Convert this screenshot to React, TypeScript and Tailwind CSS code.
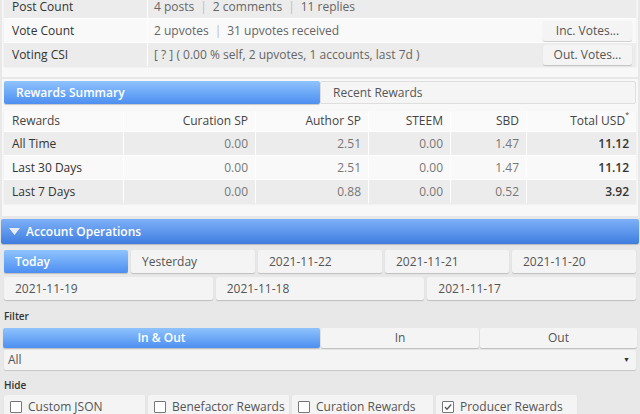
import { useState } from 'react';

const font = { fontFamily: '"Open Sans", "Liberation Sans", sans-serif' };

const rewardRows = [
  { label: 'All Time', curation: '0.00', author: '2.51', steem: '0.00', sbd: '1.47', usd: '11.12' },
  { label: 'Last 30 Days', curation: '0.00', author: '2.51', steem: '0.00', sbd: '1.47', usd: '11.12' },
  { label: 'Last 7 Days', curation: '0.00', author: '0.88', steem: '0.00', sbd: '0.52', usd: '3.92' },
];

const dayTabsTop = ['Today', 'Yesterday', '2021-11-22', '2021-11-21', '2021-11-20'];
const dayTabsBottom = ['2021-11-19', '2021-11-18', '2021-11-17'];

const hideOptions = [
  { label: 'Custom JSON', checked: false },
  { label: 'Benefactor Rewards', checked: false },
  { label: 'Curation Rewards', checked: false },
  { label: 'Producer Rewards', checked: true },
];

const btn = 'h-[23px] rounded-[2px] bg-[#f4f4f4] shadow-[0_1px_1px_rgba(0,0,0,0.18)] text-[12px] text-[#555] flex items-center';
const blue = 'bg-gradient-to-b from-[#8fc3fc] to-[#4d8ff1] text-white font-semibold';

function Sep() {
  return <span className="mx-[6px] text-[#bbb]">|</span>;
}

export default function App() {
  const [day, setDay] = useState('Today');
  const [filter, setFilter] = useState('In & Out');

  return (
    <div className="min-h-screen bg-[#e8e8e8] overflow-hidden" style={font}>
      <div className="-mt-[7px] px-[2px]">
        {/* account stats */}
        <div className="bg-[#f8f8f8] p-[2px] pb-[11px]">
          <div className="flex flex-col gap-[1px] bg-white shadow-[0_1px_2px_rgba(0,0,0,0.08)] text-[12px]">
            <div className="flex h-[23px] bg-[#ececec]">
              <div className="w-[144px] pl-[8px] flex items-center text-[#333] border-r border-white">Post Count</div>
              <div className="flex-1 pl-[6px] flex items-center text-[#666]">4 posts<Sep />2 comments<Sep />11 replies</div>
            </div>
            <div className="flex h-[23px] items-center bg-[#f9f9f9]">
              <div className="w-[144px] h-full pl-[8px] flex items-center text-[#333] border-r border-white">Vote Count</div>
              <div className="flex-1 pl-[6px] flex items-center text-[#666]">2 upvotes<Sep />31 upvotes received</div>
              <button type="button" className={`${btn} !h-[20px] mr-[4px] w-[89px] justify-center`}>Inc. Votes...</button>
            </div>
            <div className="flex h-[23px] items-center bg-[#ececec]">
              <div className="w-[144px] h-full pl-[8px] flex items-center text-[#333] border-r border-white">Voting CSI</div>
              <div className="flex-1 pl-[6px] flex items-center text-[#666]">[ ? ] ( 0.00 % self, 2 upvotes, 1 accounts, last 7d )</div>
              <button type="button" className={`${btn} !h-[20px] mr-[4px] w-[89px] justify-center`}>Out. Votes...</button>
            </div>
          </div>
        </div>

        {/* rewards */}
        <div className="mt-[2px] bg-[#f8f8f8] p-[2px] pb-[13px]">
          <div className="flex h-[23px] text-[12px]">
            <div className={`${blue} w-[316px] rounded-[2px] flex items-center pl-[12px] shadow-[0_1px_1px_rgba(0,0,0,0.2)]`}>Rewards Summary</div>
            <div className="flex-1 rounded-[2px] bg-[#f5f5f5] border border-[#dedede] flex items-center pl-[12px] text-[#555]">Recent Rewards</div>
          </div>
          <div className="mt-[7px] flex flex-col gap-[1px] bg-white shadow-[0_1px_2px_rgba(0,0,0,0.08)] text-[12px]">
            <div className="grid grid-cols-[120px_132px_113px_82px_76px_1fr] h-[20px] bg-[#fafafa] text-[#444]">
              <div className="pl-[8px] flex items-center border-r border-white">Rewards</div>
              <div className="pr-[7px] flex items-center justify-end border-r border-white">Curation SP</div>
              <div className="pr-[7px] flex items-center justify-end border-r border-white">Author SP</div>
              <div className="pr-[7px] flex items-center justify-end border-r border-white">STEEM</div>
              <div className="pr-[7px] flex items-center justify-end border-r border-white">SBD</div>
              <div className="pr-[7px] flex items-center justify-end">Total USD<sup className="text-[7px] -mt-[6px]">*</sup></div>
            </div>
            {rewardRows.map((r, i) => (
              <div key={r.label} className={`grid grid-cols-[120px_132px_113px_82px_76px_1fr] h-[23px] ${i % 2 === 0 ? 'bg-[#ececec]' : 'bg-[#f9f9f9]'}`}>
                <div className="pl-[8px] flex items-center text-[#333] border-r border-white">{r.label}</div>
                <div className="pr-[7px] flex items-center justify-end text-[#777] border-r border-white">{r.curation}</div>
                <div className="pr-[7px] flex items-center justify-end text-[#777] border-r border-white">{r.author}</div>
                <div className="pr-[7px] flex items-center justify-end text-[#777] border-r border-white">{r.steem}</div>
                <div className="pr-[7px] flex items-center justify-end text-[#777] border-r border-white">{r.sbd}</div>
                <div className="pr-[7px] flex items-center justify-end text-[#333] font-semibold">{r.usd}</div>
              </div>
            ))}
          </div>
        </div>
      </div>

      {/* account operations */}
      <div className="mt-[3px] mx-[1px] h-[25px] rounded-[2px] bg-gradient-to-b from-[#7eb0f8] to-[#3e7ddf] flex items-center pl-[8px] text-[12px] font-semibold text-white shadow-[0_1px_1px_rgba(0,0,0,0.2)]">
        <svg width="11" height="7" viewBox="0 0 11 7" className="mr-[6px]"><path d="M0 0h11L5.5 7z" fill="#e8eef8" /></svg>
        Account Operations
      </div>
      <div className="px-[4px] pt-[6px]">
        <div className="grid grid-cols-5 gap-[3px]">
          {dayTabsTop.map((d) => (
            <button key={d} type="button" onClick={() => setDay(d)} className={`${btn} pl-[11px] ${day === d ? blue : ''}`}>{d}</button>
          ))}
        </div>
        <div className="mt-[4px] grid grid-cols-3 gap-[3px]">
          {dayTabsBottom.map((d) => (
            <button key={d} type="button" onClick={() => setDay(d)} className={`${btn} pl-[11px] ${day === d ? blue : ''}`}>{d}</button>
          ))}
        </div>

        <div className="mt-[9px] text-[10px] text-[#333] font-semibold">Filter</div>
        <div className="mt-[4px] -mx-[1px] grid grid-cols-[317px_158px_1fr] gap-[1px] text-[12px]">
          {['In & Out', 'In', 'Out'].map((f) => (
            <button key={f} type="button" onClick={() => setFilter(f)} className={`h-[20px] rounded-[2px] shadow-[0_1px_1px_rgba(0,0,0,0.18)] flex items-center justify-center ${filter === f ? blue : 'bg-[#f4f4f4] text-[#555]'}`}>{f}</button>
          ))}
        </div>
        <div className="mt-[2px] h-[20px] rounded-[2px] bg-[#f4f4f4] shadow-[0_1px_1px_rgba(0,0,0,0.15)] flex items-center justify-between px-[4px] text-[12px] text-[#555]">
          <span>All</span>
          <span className="text-[7px] text-[#333] mr-[2px]">▼</span>
        </div>

        <div className="mt-[8px] text-[10px] text-[#333] font-semibold">Hide</div>
        <div className="mt-[2px] flex gap-[3px]">
          {hideOptions.map((o) => (
            <label key={o.label} className="w-[141px] h-[23px] rounded-[2px] bg-[#f4f4f4] shadow-[0_1px_1px_rgba(0,0,0,0.15)] flex items-center pl-[6px] text-[12px] text-[#555]">
              <span className="w-[12px] h-[12px] border border-[#777] rounded-[1px] bg-white mr-[6px] flex items-center justify-center">
                {o.checked && (
                  <svg width="10" height="10" viewBox="0 0 10 10"><path d="M2 5l2 2.2L8.2 2.5" stroke="#555" strokeWidth="1.3" fill="none" /></svg>
                )}
              </span>
              {o.label}
            </label>
          ))}
        </div>
      </div>
    </div>
  );
}
